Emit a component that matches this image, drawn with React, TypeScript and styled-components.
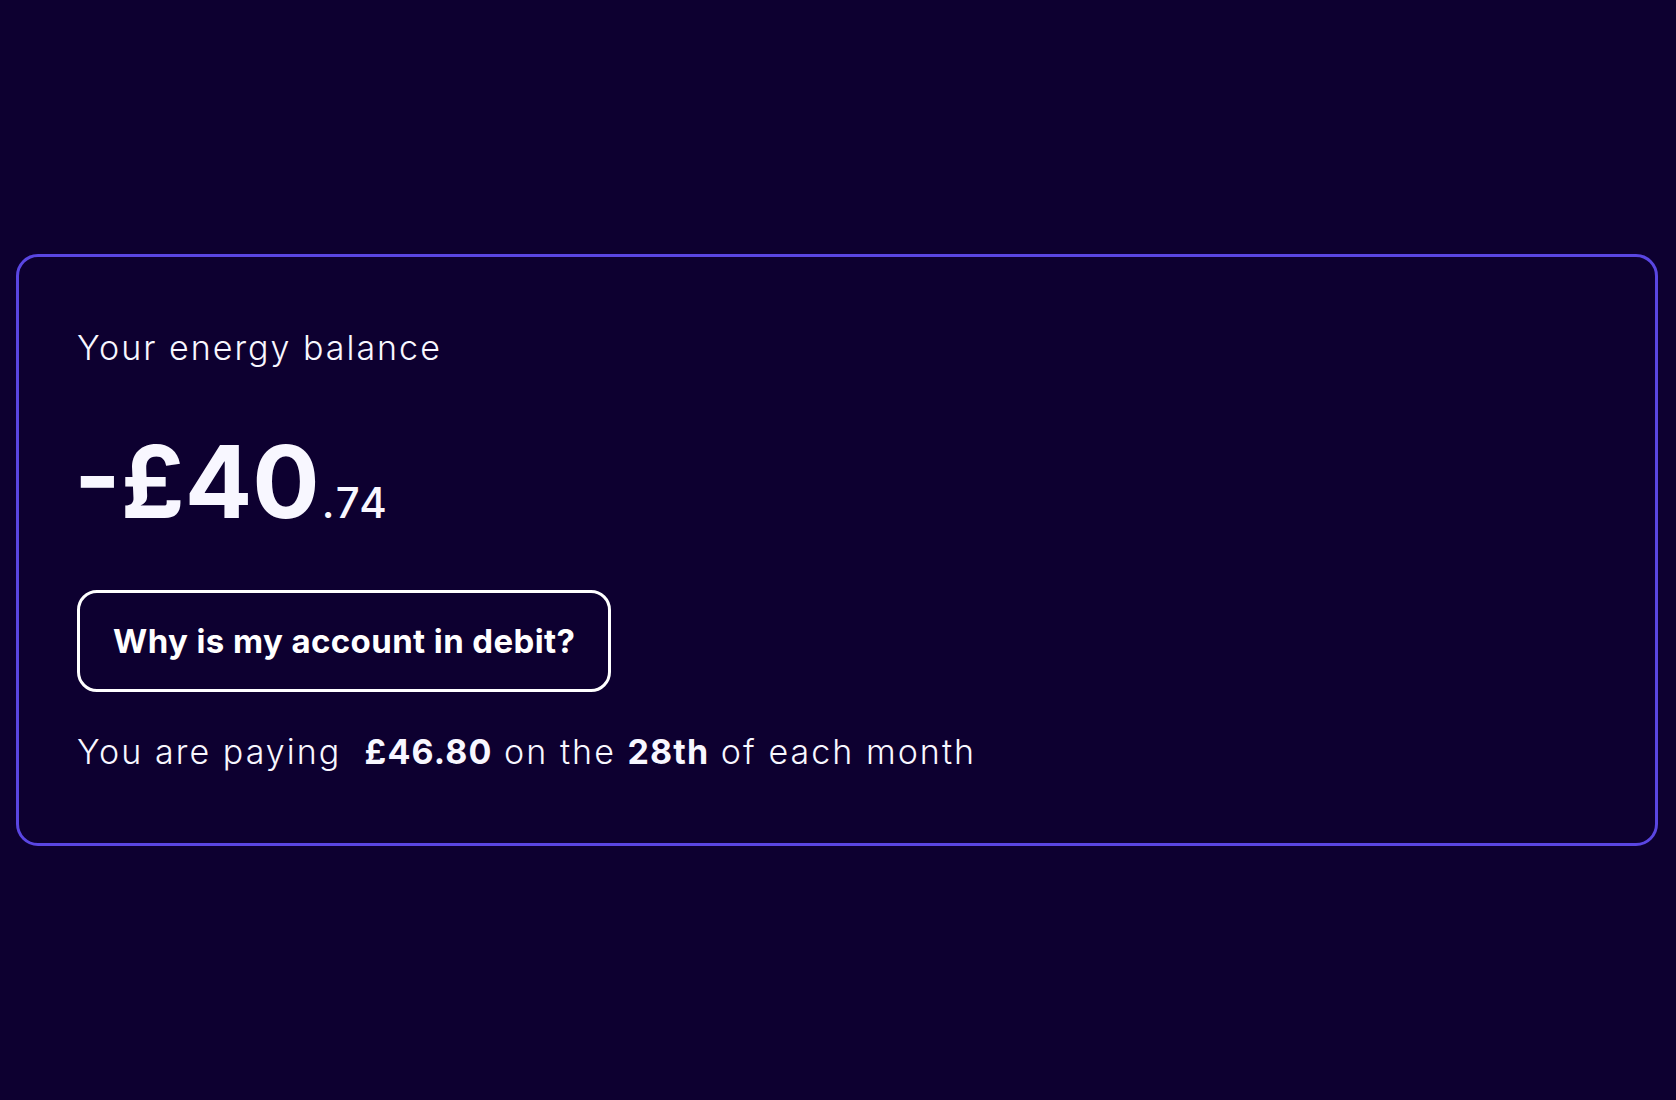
import React from "react";
import styled, { createGlobalStyle } from "styled-components";

const GlobalStyle = createGlobalStyle`
  html, body {
    margin: 0;
    padding: 0;
    background: #0d0030;
  }
  body {
    font-family: Inter, "Noto Sans", "Liberation Sans", sans-serif;
    color: #f8f7ff;
    -webkit-font-smoothing: antialiased;
  }
`;

const Page = styled.main`
  min-height: 1100px;
  padding: 254px 18px 0 16px;
  box-sizing: border-box;
`;

const Card = styled.section`
  border: 3px solid #5a46e2;
  border-radius: 22px;
  padding: 74px 58px 74px;
  display: flex;
  flex-direction: column;
  align-items: flex-start;
`;

const Label = styled.h2`
  margin: 0;
  font-size: 34px;
  font-weight: 300;
  line-height: 1;
  letter-spacing: 2px;
`;

const Amount = styled.div`
  margin: 0 0 0 -3px;
  margin-top: 67px;
  display: flex;
  align-items: baseline;
  line-height: 1;
  font-weight: 700;
`;

const Pounds = styled.span`
  font-size: 100px;
  letter-spacing: 0;
`;

const Pence = styled.span`
  font-size: 42px;
  font-weight: 500;
  letter-spacing: 2px;
  margin-left: 2px;
`;

const OutlineButton = styled.button`
  margin-top: 58px;
  background: transparent;
  color: #ffffff;
  border: 3px solid #ffffff;
  border-radius: 20px;
  padding: 32px 33px 31px;
  font-family: inherit;
  font-size: 33px;
  font-weight: 700;
  line-height: 1;
  letter-spacing: 0.4px;
  cursor: pointer;
`;

const PaymentLine = styled.p`
  margin: 43px 0 0;
  font-size: 34px;
  font-weight: 300;
  line-height: 1;
  letter-spacing: 2.05px;
  white-space: pre;
`;

const Strong = styled.strong`
  font-weight: 700;
  letter-spacing: 1.1px;
`;

export default function App() {
  return (
    <>
      <GlobalStyle />
      <Page>
        <Card>
          <Label>Your energy balance</Label>
          <Amount>
            <Pounds>-£40</Pounds>
            <Pence>.74</Pence>
          </Amount>
          <OutlineButton type="button">Why is my account in debit?</OutlineButton>
          <PaymentLine>
            {"You are paying  "}
            <Strong>£46.80</Strong>
            {" on the "}
            <Strong>28th</Strong>
            {" of each month"}
          </PaymentLine>
        </Card>
      </Page>
    </>
  );
}
